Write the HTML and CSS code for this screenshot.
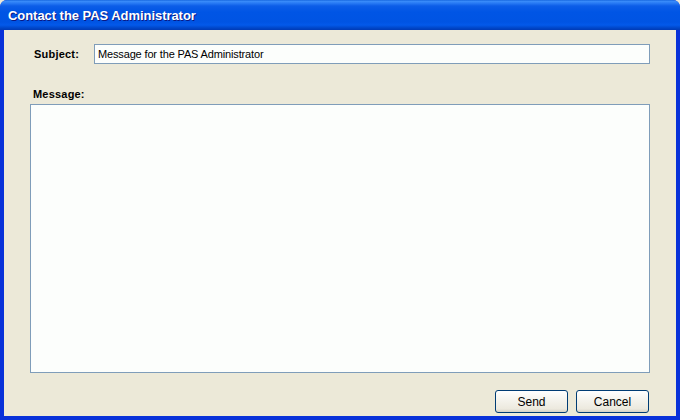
FILE: index.html
```html
<!DOCTYPE html>
<html>
<head>
<meta charset="utf-8">
<link rel="stylesheet" href="styles.css">
</head>
<body>
<div class="window">
  <div class="titlebar"><span class="title">Contact the PAS Administrator</span></div>
  <div class="client">
    <div class="subject-row">
      <label class="label subject-label">Subject:</label>
      <div class="textbox">Message for the PAS Administrator</div>
    </div>
    <label class="label message-label">Message:</label>
    <div class="textarea"></div>
    <div class="buttons">
      <button class="btn">Send</button>
      <button class="btn">Cancel</button>
    </div>
  </div>
</div>
</body>
</html>
```
FILE: styles.css
```css
* { box-sizing: border-box; }
html, body { margin: 0; padding: 0; background: #ece9d8; }
body { width: 680px; height: 420px; overflow: hidden; font-family: "Liberation Sans", "DejaVu Sans", sans-serif; font-size: 11px; color: #000; }
.window {
  width: 680px; height: 420px;
  display: flex; flex-direction: column;
  background: #0831d9;
  border-radius: 7px 7px 0 0;
  overflow: hidden;
}
.titlebar {
  height: 30px; flex: none;
  background: linear-gradient(to bottom, #0a5ad8 0px, #3d8ffa 1px, #2a7cf5 3px, #0c5de8 6px, #0055e5 12px, #0054e3 22px, #0359ea 25px, #0046c8 28px, #003ab6 30px);
  display: flex; align-items: center;
  padding-left: 8px; padding-top: 1px;
}
.title {
  color: #fff; font-family: "Liberation Sans", "DejaVu Sans", sans-serif; font-weight: bold; font-size: 13px;
  text-shadow: 1px 1px 0 #0a1883;
  letter-spacing: -0.05px;
}
.client {
  flex: 1;
  margin: 0 4px 4px 4px;
  background: #ece9d8;
  display: flex; flex-direction: column;
  padding: 14px 26px 0 26px;
}
.subject-row { display: flex; align-items: center; height: 20px; }
.label { font-weight: bold; font-size: 11px; letter-spacing: 0.2px; }
.subject-label { margin-left: 4px; width: 60px; }
.textbox {
  flex: 1; height: 20px;
  border: 1px solid #7f9db9; background: #fcfefc;
  padding: 2px 3px; line-height: 14px; white-space: nowrap;
  letter-spacing: -0.15px;
}
.message-label { margin-top: 24px; margin-left: 3px; line-height: 13px; }
.textarea {
  margin-top: 3px;
  height: 269px;
  border: 1px solid #7f9db9; background: #fcfefc;
}
.buttons { display: flex; justify-content: flex-end; gap: 8px; margin-top: 17px; padding-right: 1px; }
.btn {
  width: 73px; height: 23px; margin: 0;
  border: 1px solid #003c74; border-radius: 3px;
  background: linear-gradient(to bottom, #ffffff 0%, #f5f4ee 40%, #ece9de 85%, #d6d0c5 100%);
  font-family: "Liberation Sans", "DejaVu Sans", sans-serif; font-size: 12px; color: #000;
  padding: 0;
}
```
